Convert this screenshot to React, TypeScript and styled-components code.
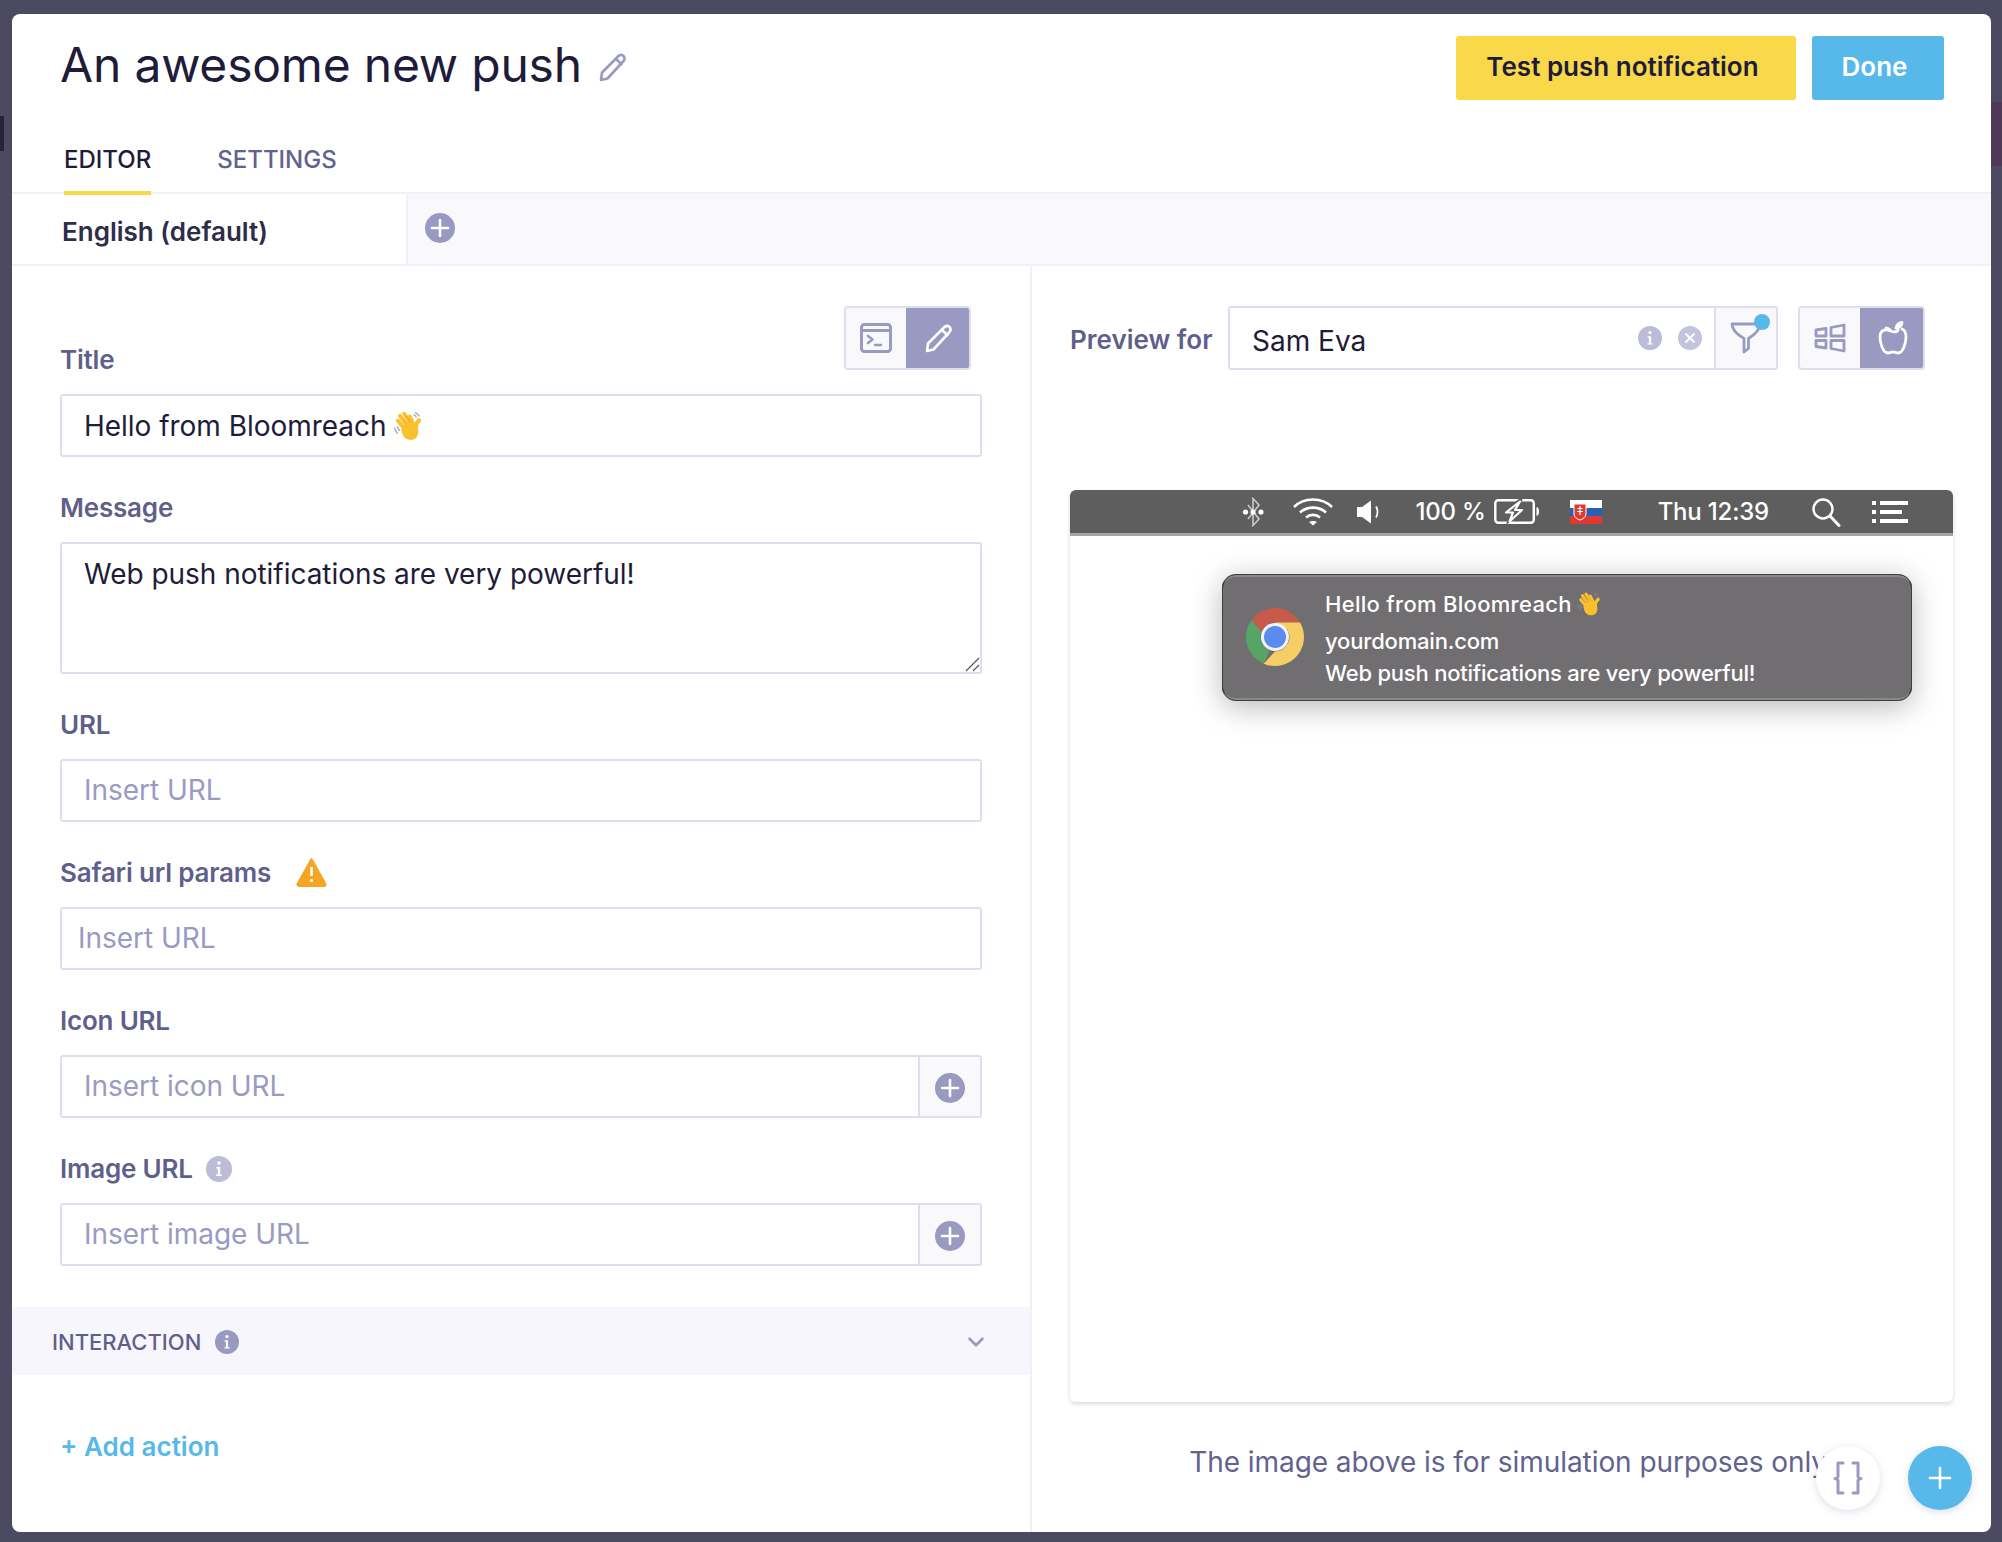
import React from "react";
import styled, { createGlobalStyle } from "styled-components";
import { ChevronDown } from "lucide-react";

const GlobalStyle = createGlobalStyle`
  html, body {
    margin: 0;
    padding: 0;
    background: #4c4a60;
    font-family: Inter, "Noto Sans", sans-serif;
  }
  * {
    box-sizing: border-box;
  }
`;

const accent = "#9999c2";
const line = "#dedeef";

const Page = styled.div`
  position: relative;
  width: 2002px;
  height: 1542px;
  padding: 14px 11px 10px 12px;
  overflow: hidden;
`;
const BackdropMark = styled.div`
  position: absolute;
  left: 0;
  top: 116px;
  width: 4px;
  height: 35px;
  background: #26243c;
`;
const BackdropBand = styled.div`
  position: absolute;
  right: 0;
  top: 102px;
  width: 11px;
  height: 64px;
  background: #4e3a58;
`;
const Modal = styled.div`
  position: relative;
  height: 100%;
  display: flex;
  flex-direction: column;
  background: #fff;
  border-radius: 8px;
  overflow: hidden;
`;
const Header = styled.header`
  position: relative;
  z-index: 1;
  height: 178px;
  padding: 22px 47px 0 49px;
  display: flex;
  flex-direction: column;
`;
const HeaderTop = styled.div`
  display: flex;
  justify-content: space-between;
  align-items: flex-start;
`;
const TitleGroup = styled.div`
  display: flex;
  align-items: center;
  gap: 16px;
`;
const TitleIcon = styled.div`
  display: flex;
  margin-top: 4px;
`;
const Title = styled.h1`
  margin: 0 0 0 -1px;
  font-size: 48px;
  line-height: 58px;
  font-weight: 400;
  letter-spacing: -0.2px;
  color: #1e1c3a;
`;
const HeaderActions = styled.div`
  display: flex;
  gap: 16px;
`;
const ActionButton = styled.button<{ $variant: "yellow" | "blue" }>`
  height: 64px;
  width: ${(p) => (p.$variant === "yellow" ? "340px" : "132px")};
  padding: 0 7px 3px 0;
  border: 0;
  border-radius: 3px;
  background: ${(p) => (p.$variant === "yellow" ? "#f9d849" : "#57b8ea")};
  color: ${(p) => (p.$variant === "yellow" ? "#1e1c3a" : "#fff")};
  font: 600 26px Inter, sans-serif;
`;
const Tabs = styled.nav`
  margin-top: 41px;
  display: flex;
  gap: 66px;
  padding-left: 3px;
`;
const Tab = styled.div<{ $active?: boolean }>`
  height: 54px;
  padding-top: 4px;
  font-size: 24px;
  line-height: 30px;
  font-weight: 500;
  color: ${(p) => (p.$active ? "#1e1c3a" : "#62628f")};
  border-bottom: 4px solid ${(p) => (p.$active ? "#f9d849" : "transparent")};
`;
const LangBar = styled.div`
  height: 74px;
  display: flex;
  background: #f9f9fc;
  border-top: 2px solid #f0f0f7;
  border-bottom: 2px solid #f0f0f7;
`;
const LangTab = styled.div`
  width: 396px;
  padding: 22px 0 0 50px;
  background: #fff;
  border-right: 2px solid #f0f0f7;
  font-size: 26px;
  line-height: 32px;
  font-weight: 600;
  color: #2e2d4a;
`;
const LangAdd = styled.div`
  padding: 19px 0 0 17px;
`;
const Body = styled.div`
  flex: 1;
  display: flex;
  min-height: 0;
`;
const EditorPane = styled.section`
  width: 1020px;
  border-right: 2px solid #f0f0f7;
  display: flex;
  flex-direction: column;
`;
const Form = styled.div`
  padding: 40px 48px 0 48px;
`;
const TitleRow = styled.div`
  height: 70px;
  margin-bottom: 18px;
  padding-right: 11px;
  display: flex;
  justify-content: space-between;
`;
const Field = styled.div`
  margin-bottom: 35px;
`;
const Label = styled.label`
  height: 32px;
  display: flex;
  align-items: center;
  align-self: flex-end;
  gap: 13px;
  font-size: 26px;
  line-height: 32px;
  font-weight: 600;
  letter-spacing: -0.2px;
  color: #5f5f8c;
  margin-bottom: 18px;
  ${TitleRow} & {
    margin-bottom: 0;
  }
`;
const LabelWarning = styled.span`
  display: flex;
  margin-left: 12px;
  margin-top: -3px;
`;
const InputBox = styled.div`
  height: 63px;
  display: flex;
  background: #fff;
  border: 2px solid ${line};
  border-radius: 3px;
`;
const InputText = styled.div<{ $muted?: boolean; $tight?: boolean }>`
  flex: 1;
  display: flex;
  align-items: center;
  gap: 5px;
  padding-left: ${(p) => (p.$tight ? "16px" : "22px")};
  padding-bottom: ${(p) => (p.$muted ? "2px" : "0")};
  font-size: 28px;
  letter-spacing: -0.03px;
  color: ${(p) => (p.$muted ? "#9a9ac3" : "#1e1c3a")};
`;
const TextArea = styled.div`
  position: relative;
  height: 132px;
  padding: 13px 22px;
  background: #fff;
  border: 2px solid ${line};
  border-radius: 3px;
  font-size: 28px;
  line-height: 34px;
  letter-spacing: -0.03px;
  color: #1e1c3a;
`;
const ResizeGrip = styled.svg`
  position: absolute;
  right: 0;
  bottom: 0;
`;
const InputAddon = styled.div`
  width: 62px;
  padding-top: 2px;
  display: flex;
  align-items: center;
  justify-content: center;
  background: #f9f9fc;
  border-left: 2px solid ${line};
`;
const Interaction = styled.div`
  height: 68px;
  margin-top: 6px;
  padding: 1px 41px 0 40px;
  display: flex;
  align-items: center;
  gap: 14px;
  background: #f7f6fc;
  font-size: 22px;
  font-weight: 500;
  color: #5f5f8c;
`;
const InteractionChevron = styled.div`
  margin-left: auto;
  display: flex;
`;
const AddAction = styled.div`
  margin: 56px 0 0 48px;
  font-size: 26px;
  line-height: 32px;
  font-weight: 600;
  color: #57b8ea;
`;
const PreviewPane = styled.section`
  flex: 1;
  min-width: 0;
  padding: 40px 38px 0 38px;
  display: flex;
  flex-direction: column;
`;
const PreviewBar = styled.div`
  display: flex;
  align-items: center;
  height: 64px;
`;
const PreviewLabel = styled.div`
  width: 158px;
  padding-top: 2px;
  font-size: 26px;
  font-weight: 600;
  color: #5f5f8c;
`;
const PreviewInput = styled.div`
  width: 550px;
  height: 64px;
  display: flex;
  background: #fff;
  border: 2px solid ${line};
  border-radius: 3px;
`;
const PreviewName = styled.div`
  flex: 1;
  display: flex;
  align-items: center;
  padding: 6px 0 0 22px;
  font-size: 28px;
  color: #1e1c3a;
`;
const PreviewIcons = styled.div`
  display: flex;
  align-items: center;
  gap: 16px;
  padding-right: 12px;
`;
const FilterAddon = styled.div`
  position: relative;
  width: 62px;
  display: flex;
  align-items: center;
  justify-content: center;
  background: #f9f9fc;
  border-left: 2px solid ${line};
`;
const FilterDot = styled.span`
  position: absolute;
  top: 6px;
  right: 6px;
  width: 16px;
  height: 16px;
  border-radius: 50%;
  background: #57b8ea;
`;
const Toggle = styled.div<{ $spaced?: boolean }>`
  display: flex;
  width: 127px;
  height: 64px;
  margin-left: ${(p) => (p.$spaced ? "20px" : "0")};
  border: 2px solid ${line};
  border-radius: 4px;
  overflow: hidden;
  background: #f9f9fc;
`;
const ToggleItem = styled.div`
  width: 60px;
  display: flex;
  align-items: center;
  justify-content: center;
`;
const ToggleActive = styled.div`
  flex: 1;
  margin: -2px -2px -2px 0;
  display: flex;
  align-items: center;
  justify-content: center;
  background: ${accent};
`;
const Desktop = styled.div`
  height: 912px;
  margin-top: 120px;
  background: #fff;
  border-radius: 6px;
  box-shadow: 0 2px 4px rgba(80, 80, 140, 0.22);
`;
const MenuBar = styled.div`
  height: 46px;
  padding-right: 45px;
  display: flex;
  align-items: center;
  justify-content: flex-end;
  background: #5e5e5e;
  border-bottom: 3px solid #a4a4a4;
  border-radius: 6px 6px 0 0;
  color: #fff;
  font-size: 24px;
  font-weight: 500;
  letter-spacing: -0.2px;
`;
const MenuItem = styled.div<{ $gap: number }>`
  display: flex;
  align-items: center;
  margin-left: ${(p) => p.$gap}px;
`;
const Notification = styled.div`
  width: 690px;
  height: 127px;
  margin: 38px 0 0 152px;
  padding: 0 0 0 23px;
  display: flex;
  align-items: center;
  gap: 21px;
  background: #706e71;
  border: 1px solid #3a3a3a;
  border-bottom: 3px solid #8a888b;
  border-top: 3px solid #8a888b;
  outline: 1px solid #3f3f3f;
  outline-offset: -1px;
  border-radius: 14px;
  box-shadow: 0 6px 30px rgba(0, 0, 0, 0.28);
  color: #fff;
  font-size: 22px;
  font-weight: 500;
`;
const NotificationIcon = styled.div`
  display: flex;
  margin-top: -2px;
`;
const NotificationText = styled.div`
  align-self: flex-start;
  padding-top: 11px;
  display: flex;
  flex-direction: column;
`;
const NotificationLine = styled.div<{ $height: number; $track: number }>`
  display: flex;
  align-items: center;
  gap: 4px;
  height: ${(p) => p.$height}px;
  letter-spacing: ${(p) => p.$track}px;
`;
const Disclaimer = styled.div`
  margin-top: 42px;
  text-align: center;
  font-size: 28px;
  line-height: 36px;
  letter-spacing: -0.06px;
  color: #62628f;
`;
const Fab = styled.div<{ $primary?: boolean; $right: number }>`
  position: absolute;
  right: ${(p) => p.$right}px;
  bottom: 22px;
  width: 64px;
  height: 64px;
  display: flex;
  align-items: center;
  justify-content: center;
  border-radius: 50%;
  background: ${(p) => (p.$primary ? "#57b8ea" : "#fff")};
  box-shadow: 0 2px 8px rgba(90, 90, 150, 0.2);
`;

const PencilIcon = ({ color = accent, size = 30 }: { color?: string; size?: number }) => (
  <svg width={size} height={size} viewBox="0 0 30 30" fill="none" stroke={color} strokeWidth="2.6" strokeLinejoin="round" strokeLinecap="round">
    <path d="M3 28 4 20.500 20.500 4c1.500-1.500 3.800-1.500 5 0 1.400 1.300 1.400 3.500 0 5L9.500 26.500 3 28Z" />
    <path d="M18 7l5.500 5.200" />
  </svg>
);
const PlusCircle = ({ size = 30 }: { size?: number }) => (
  <svg width={size} height={size} viewBox="0 0 30 30">
    <circle cx="15" cy="15" r="15" fill={accent} />
    <path d="M15 7v16M7 15h16" stroke="#fff" strokeWidth="2.6" strokeLinecap="round" />
  </svg>
);
const InfoCircle = ({ color = "#bcbcd9", size = 24 }: { color?: string; size?: number }) => (
  <svg width={size} height={size} viewBox="0 0 22 22">
    <circle cx="11" cy="11" r="11" fill={color} />
    <circle cx="11" cy="6" r="1.500" fill="#fff" />
    <path d="M8.800 9.300h3.200v6.400h1.400v1.300H8.600v-1.300h1.400v-5H8.800Z" fill="#fff" />
  </svg>
);
const ClearCircle = () => (
  <svg width="24" height="24" viewBox="0 0 22 22">
    <circle cx="11" cy="11" r="11" fill="#c3c3dd" />
    <path d="M7.500 7.500l7 7M14.500 7.500l-7 7" stroke="#fff" strokeWidth="2" strokeLinecap="round" />
  </svg>
);
const WarningIcon = () => (
  <svg width="31" height="30" viewBox="0 0 31 30">
    <path d="M15.500 2 29.500 27a1.500 1.500 0 0 1-1.300 2H2.800a1.500 1.500 0 0 1-1.300-2L15.500 2Z" fill="#f5a623" stroke="#f5a623" strokeWidth="2" strokeLinejoin="round" />
    <path d="M15.500 10v9" stroke="#fff" strokeWidth="2.600" />
    <circle cx="15.500" cy="23.500" r="1.600" fill="#fff" />
  </svg>
);
const TerminalIcon = () => (
  <svg width="32" height="30" viewBox="0 0 32 30" fill="none" stroke={accent} strokeWidth="3" strokeLinecap="round" strokeLinejoin="round">
    <rect x="1.500" y="1.500" width="29" height="27" rx="3" />
    <path d="M1.500 7.500h29" />
    <path d="M8 13l4.500 3.500L8 20M15 22h6" strokeWidth="2.600" />
  </svg>
);
const FunnelIcon = () => (
  <svg width="32" height="34" viewBox="0 0 32 34" fill="none" stroke={accent} strokeWidth="2.800" strokeLinejoin="round">
    <path d="M2 3h28c0 6-6 11-11.500 14.500v10L14 31V17.500C8 14 2 9 2 3Z" />
  </svg>
);
const WindowsIcon = () => (
  <svg width="32" height="30" viewBox="0 0 32 30" fill="none" stroke={accent} strokeWidth="2.800" strokeLinejoin="round">
    <path d="M2 7l10-1.500V13H2ZM17 4.500 30 2v11H17ZM2 17.500h10V25L2 23.500ZM17 17.500h13V28l-13-2.500Z" />
  </svg>
);
const AppleIcon = () => (
  <svg width="30" height="34" viewBox="0 0 30 34" fill="none" stroke="#fff" strokeWidth="2.800" strokeLinejoin="round" strokeLinecap="round">
    <path d="M11 9.500C8 8 2 8.500 2 16c0 6 3 16 8 16 2 0 3-1.200 5-1.200s3 1.200 5 1.200c5 0 8-10 8-16 0-4-1.500-7-4-8" />
    <path d="M8 7c2 .3 4 1.500 5.500 3.500C16 11 19 11 20 9" />
    <path d="M18 7c.5-3 3-5 6-5.500 0 3-2.500 5.500-6 5.500Z" fill="#fff" />
  </svg>
);
const BracesIcon = () => (
  <svg width="34" height="34" viewBox="0 0 34 34" fill="none" stroke={accent} strokeWidth="3" strokeLinejoin="round" strokeLinecap="round">
    <path d="M12 2H7v14L4 17.500 7 19v13h5M22 2h5v14l3 1.500-3 1.500v13h-5" />
  </svg>
);
const ThinPlus = () => (
  <svg width="24" height="24" viewBox="0 0 24 24">
    <path d="M12 2v20M2 12h20" stroke="#fff" strokeWidth="2.600" strokeLinecap="round" />
  </svg>
);
const WaveIcon = ({ size = 28 }: { size?: number }) => (
  <svg width={size} height={size} viewBox="0 0 30 30" fill="none" strokeLinecap="round">
    <g stroke="#fbc02d" strokeWidth="3.600">
      <path d="M5.500 10 13 19" />
      <path d="M7.500 5.500 15 16" />
      <path d="M11.500 3.500 18 14" />
      <path d="M16.500 6 20.500 14" />
    </g>
    <path d="M25.500 9.500C24 11 22 14 21.800 17" stroke="#fbc02d" strokeWidth="3.800" />
    <path d="M9 15.500c-1 5 1.500 12 7.500 12.500 5 .4 8.500-3 8.200-8.500L24 14l-9-2-6 3.500Z" fill="#fbc02d" />
    <path d="M10.500 8 14 13M14 6.500 17 11.500" stroke="#e89c16" strokeWidth=".7" />
    <path d="M2.500 17c.4 1.800 1.300 3.400 2.700 4.800M5 16c.4 1.300 1 2.400 2 3.400M22 2.500c1.500.6 2.700 1.700 3.400 3.200M20.500 4.500c1 .4 1.700 1.100 2.200 2" stroke="#8f8fa0" strokeWidth="1" />
  </svg>
);
const BluetoothIcon = () => (
  <svg width="24" height="30" viewBox="0 0 24 30" fill="none">
    <path d="M6 8l11 14-6 6.500V1.500l6 6.500L6 22" stroke="#c9c9c9" strokeWidth="1.600" />
    <circle cx="3.500" cy="15" r="2.600" fill="#fff" />
    <circle cx="11" cy="15" r="2.600" fill="#fff" />
    <circle cx="19" cy="15" r="2.600" fill="#fff" />
  </svg>
);
const WifiIcon = () => (
  <svg width="42" height="29" viewBox="0 0 42 29" fill="none" stroke="#fff" strokeWidth="2.600">
    <path d="M2 10C12 0 30 0 40 10M8 15.500c7-6.500 19-6.500 26 0M14 20.500c4-3.500 10-3.500 14 0" />
    <path d="M21 28.500l-4-3.500c2-1.500 6-1.500 8 0Z" fill="#fff" stroke="none" />
  </svg>
);
const VolumeIcon = () => (
  <svg width="26" height="24" viewBox="0 0 26 24">
    <path d="M1 7h5l9-6.500v23L6 17H1Z" fill="#fff" />
    <path d="M20 6.500c2 3 2 8 0 11" fill="none" stroke="#fff" strokeWidth="1.800" />
  </svg>
);
const BatteryIcon = () => (
  <svg width="46" height="25" viewBox="0 0 46 25" fill="none">
    <rect x="1.300" y="1.300" width="38.500" height="22.400" rx="3" stroke="#fff" strokeWidth="2.400" />
    <path d="M26 -1 9 13h7L12 26 31 11h-7l5-12Z" fill="#5e5e5e" />
    <path d="M26 2.500 12 13.500h7L15.500 22.500 28 11h-7l5-8.500Z" stroke="#fff" strokeWidth="2.200" strokeLinejoin="round" />
    <path d="M42.500 8c1.800 0 2.500 2.500 2.500 4.500S44.300 17 42.500 17Z" fill="#fff" />
  </svg>
);
const FlagIcon = () => (
  <svg width="32" height="24" viewBox="0 0 32 24">
    <rect width="32" height="8" fill="#fff" />
    <rect y="8" width="32" height="8" fill="#2a5fb5" />
    <rect y="16" width="32" height="8" fill="#de3a32" />
    <path d="M4 4h12v10c0 3-3 5-6 6-3-1-6-3-6-6Z" fill="#de3a32" stroke="#fff" strokeWidth="1" />
    <path d="M10 6v9M7.500 8.500h5M7 11.500h6" stroke="#fff" strokeWidth="1.200" />
  </svg>
);
const MagnifierIcon = () => (
  <svg width="30" height="30" viewBox="0 0 30 30" fill="none" stroke="#fff" strokeLinecap="round">
    <circle cx="12" cy="12" r="9.500" strokeWidth="2.400" />
    <path d="M19 19l9 9.500" strokeWidth="3" />
  </svg>
);
const ListIcon = () => (
  <svg width="36" height="22" viewBox="0 0 36 22" fill="#fff">
    <rect y="0" width="4" height="4" />
    <rect y="9" width="4" height="4" />
    <rect y="18" width="4" height="4" />
    <rect x="8" y="0" width="28" height="4" />
    <rect x="8" y="9" width="22" height="4" />
    <rect x="8" y="18" width="28" height="4" />
  </svg>
);
const ChromeIcon = () => (
  <svg width="58" height="58" viewBox="0 0 58 58">
    <path d="M29 0a29 29 0 0 1 25.100 14.500H29a14.500 14.500 0 0 0-13.600 9.500L5.500 12A29 29 0 0 1 29 0Z" fill="#c85a4c" />
    <path d="M5.500 12 15.400 24a14.500 14.500 0 0 0 8.100 18.400L17.600 55.700A29 29 0 0 1 5.500 12Z" fill="#57a566" />
    <path d="M54.100 14.500A29 29 0 0 1 29 58a29 29 0 0 1-11.400-2.300L29 43.500a14.500 14.500 0 0 0 12.300-22l-12.300-7Z" fill="#f5cf66" />
    <circle cx="29" cy="29" r="14" fill="#f3f3f3" />
    <circle cx="29" cy="29" r="11" fill="#5b8bee" />
  </svg>
);

export default function App() {
  return (
    <>
      <GlobalStyle />
      <Page>
        <BackdropMark />
        <BackdropBand />
        <Modal>
          <Header>
            <HeaderTop>
              <TitleGroup>
                <Title>An awesome new push</Title>
                <TitleIcon>
                  <PencilIcon />
                </TitleIcon>
              </TitleGroup>
              <HeaderActions>
                <ActionButton $variant="yellow">Test push notification</ActionButton>
                <ActionButton $variant="blue">Done</ActionButton>
              </HeaderActions>
            </HeaderTop>
            <Tabs>
              <Tab $active>EDITOR</Tab>
              <Tab>SETTINGS</Tab>
            </Tabs>
          </Header>
          <LangBar>
            <LangTab>English (default)</LangTab>
            <LangAdd>
              <PlusCircle />
            </LangAdd>
          </LangBar>
          <Body>
            <EditorPane>
              <Form>
                <TitleRow>
                  <Label>Title</Label>
                  <Toggle>
                    <ToggleItem>
                      <TerminalIcon />
                    </ToggleItem>
                    <ToggleActive>
                      <PencilIcon color="#fff" />
                    </ToggleActive>
                  </Toggle>
                </TitleRow>
                <Field>
                  <InputBox>
                    <InputText>
                      Hello from Bloomreach
                      <WaveIcon size={32} />
                    </InputText>
                  </InputBox>
                </Field>
                <Field>
                  <Label>Message</Label>
                  <TextArea>
                    Web push notifications are very powerful!
                    <ResizeGrip width="16" height="16" viewBox="0 0 16 16" stroke="#555" strokeWidth="1.200">
                      <path d="M2 15 15 2M9 15l6-6" />
                    </ResizeGrip>
                  </TextArea>
                </Field>
                <Field>
                  <Label>URL</Label>
                  <InputBox>
                    <InputText $muted>Insert URL</InputText>
                  </InputBox>
                </Field>
                <Field>
                  <Label>
                    Safari url params
                    <LabelWarning>
                      <WarningIcon />
                    </LabelWarning>
                  </Label>
                  <InputBox>
                    <InputText $muted $tight>
                      Insert URL
                    </InputText>
                  </InputBox>
                </Field>
                <Field>
                  <Label>Icon URL</Label>
                  <InputBox>
                    <InputText $muted>Insert icon URL</InputText>
                    <InputAddon>
                      <PlusCircle />
                    </InputAddon>
                  </InputBox>
                </Field>
                <Field>
                  <Label>
                    Image URL
                    <InfoCircle size={26} />
                  </Label>
                  <InputBox>
                    <InputText $muted>Insert image URL</InputText>
                    <InputAddon>
                      <PlusCircle />
                    </InputAddon>
                  </InputBox>
                </Field>
              </Form>
              <Interaction>
                INTERACTION
                <InfoCircle color={accent} />
                <InteractionChevron>
                  <ChevronDown size={26} color={accent} strokeWidth={2.4} />
                </InteractionChevron>
              </Interaction>
              <AddAction>+ Add action</AddAction>
            </EditorPane>
            <PreviewPane>
              <PreviewBar>
                <PreviewLabel>Preview for</PreviewLabel>
                <PreviewInput>
                  <PreviewName>Sam Eva</PreviewName>
                  <PreviewIcons>
                    <InfoCircle />
                    <ClearCircle />
                  </PreviewIcons>
                  <FilterAddon>
                    <FunnelIcon />
                    <FilterDot />
                  </FilterAddon>
                </PreviewInput>
                <Toggle $spaced>
                  <ToggleItem>
                    <WindowsIcon />
                  </ToggleItem>
                  <ToggleActive>
                    <AppleIcon />
                  </ToggleActive>
                </Toggle>
              </PreviewBar>
              <Desktop>
                <MenuBar>
                  <MenuItem $gap={0}>
                    <BluetoothIcon />
                  </MenuItem>
                  <MenuItem $gap={26}>
                    <WifiIcon />
                  </MenuItem>
                  <MenuItem $gap={22}>
                    <VolumeIcon />
                  </MenuItem>
                  <MenuItem $gap={33}>100 %</MenuItem>
                  <MenuItem $gap={8}>
                    <BatteryIcon />
                  </MenuItem>
                  <MenuItem $gap={30}>
                    <FlagIcon />
                  </MenuItem>
                  <MenuItem $gap={56}>Thu 12:39</MenuItem>
                  <MenuItem $gap={42}>
                    <MagnifierIcon />
                  </MenuItem>
                  <MenuItem $gap={31}>
                    <ListIcon />
                  </MenuItem>
                </MenuBar>
                <Notification>
                  <NotificationIcon>
                    <ChromeIcon />
                  </NotificationIcon>
                  <NotificationText>
                    <NotificationLine $height={31} $track={0.3}>
                      Hello from Bloomreach
                      <WaveIcon size={26} />
                    </NotificationLine>
                    <NotificationLine $height={44} $track={-0.18}>
                      yourdomain.com
                    </NotificationLine>
                    <NotificationLine $height={20} $track={-0.22}>
                      Web push notifications are very powerful!
                    </NotificationLine>
                  </NotificationText>
                </Notification>
              </Desktop>
              <Disclaimer>The image above is for simulation purposes only.</Disclaimer>
            </PreviewPane>
          </Body>
          <Fab $right={111}>
            <BracesIcon />
          </Fab>
          <Fab $primary $right={19}>
            <ThinPlus />
          </Fab>
        </Modal>
      </Page>
    </>
  );
}
